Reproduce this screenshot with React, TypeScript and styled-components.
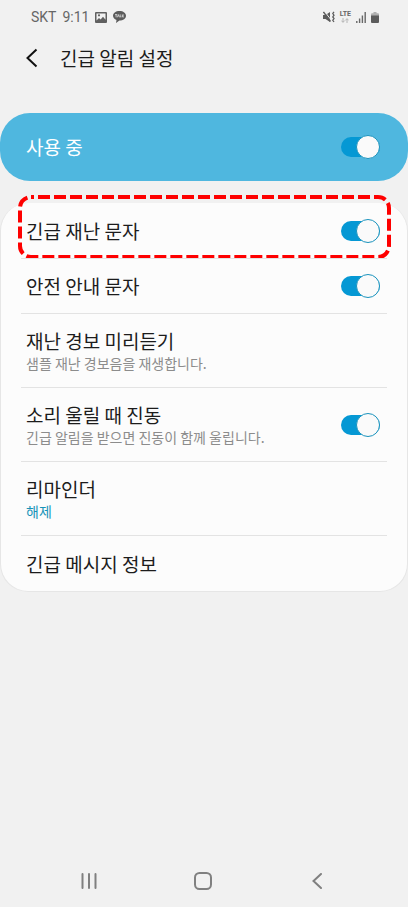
import React, { useState } from "react";
import styled, { createGlobalStyle } from "styled-components";

const GlobalStyle = createGlobalStyle`
  *, *::before, *::after { box-sizing: border-box; }
  body {
    margin: 0;
    background: #f1f1f1;
    color: #1c1c1c;
    font-family: "Noto Sans CJK KR", "Noto Sans", sans-serif;
  }
`;

const Screen = styled.div`
  min-height: 100vh;
  display: flex;
  flex-direction: column;
  background: #f1f1f1;
`;

const StatusBar = styled.div`
  display: flex;
  align-items: center;
  justify-content: space-between;
  height: 34px;
  padding: 0 29px 0 31px;
  color: #666;
  font: 14px/20px Roboto, sans-serif;
`;

const StatusGroup = styled.div<{ $gap: number }>`
  display: flex;
  align-items: center;
  gap: ${(p) => p.$gap}px;
`;

const Header = styled.header`
  display: flex;
  align-items: center;
  gap: 20px;
  height: 48px;
  padding: 0 24px;
  margin-bottom: 31px;
`;

const IconButton = styled.button`
  display: flex;
  align-items: center;
  justify-content: center;
  padding: 0;
  border: 0;
  background: none;
  color: inherit;
  cursor: pointer;
`;

const PageTitle = styled.h1`
  margin: 0;
  font-size: 19px;
  line-height: 28px;
  font-weight: 400;
`;

const MasterRow = styled.label`
  display: flex;
  align-items: center;
  justify-content: space-between;
  height: 68px;
  padding: 0 28px 0 26px;
  border-radius: 30px;
  background: #4fb7df;
  color: #fff;
  font-size: 19px;
  line-height: 24px;
  cursor: pointer;
`;

const Card = styled.main`
  margin-top: 22px;
  padding: 0 20px;
  border: 1px solid #e6e6e6;
  border-top: 0;
  border-radius: 28px;
  background: #fcfcfc;
`;

const List = styled.ul`
  margin: 0;
  padding: 0;
  list-style: none;
`;

const Item = styled.li<{ $tall?: boolean }>`
  position: relative;
  display: flex;
  min-height: ${(p) => (p.$tall ? 74 : 55)}px;
  & + & { border-top: 1px solid #e3e3e3; }
  &:last-child { min-height: 56px; }
`;

const rowStyle = `
  flex: 1;
  display: flex;
  align-items: center;
  justify-content: space-between;
  padding: 0 7px 0 5px;
  border: 0;
  background: none;
  color: inherit;
  font: inherit;
  text-align: left;
  cursor: pointer;
`;
const SwitchRow = styled.label`${rowStyle}`;
const LinkRow = styled.button`${rowStyle}`;

const Texts = styled.span`
  display: flex;
  flex-direction: column;
`;

const Title = styled.span`
  font-size: 19px;
  line-height: 24px;
`;

const Note = styled.span<{ $accent?: boolean }>`
  font-size: 14px;
  line-height: 20px;
  color: ${(p) => (p.$accent ? "#1793b8" : "#8c8c8c")};
`;

const Switch = styled.input.attrs({ type: "checkbox", role: "switch" })`
  appearance: none;
  flex: none;
  display: flex;
  align-items: center;
  width: 39px;
  height: 20px;
  margin: 0;
  cursor: pointer;
  background: #0598d4;
  border-radius: 10px;
  &::before {
    content: "";
    flex: none;
    width: 24px;
    height: 24px;
    border: 1px solid #1a93bd;
    border-radius: 50%;
    background: #fafafa;
  }
  &:checked::before { margin-left: auto; }
  &:not(:checked) { filter: grayscale(1); }
`;

const Highlight = styled.svg`
  position: absolute;
  top: -8px;
  left: -3px;
  width: calc(100% + 7px);
  height: 64px;
  pointer-events: none;
  overflow: visible;
  rect {
    x: 2px;
    y: 2px;
    width: calc(100% - 4px);
    height: 60px;
    fill: none;
    stroke: #fe0000;
    stroke-width: 4px;
    stroke-dasharray: 12 4;
    stroke-dashoffset: -7px;
  }
`;

const NavBar = styled.nav`
  display: flex;
  justify-content: space-around;
  align-items: center;
  margin-top: auto;
  height: 52px;
  padding: 0 34px 0 32px;
  color: #808080;
`;

const NavButton = styled(IconButton)`
  width: 48px;
  height: 40px;
`;

type Setting = {
  title: string;
  note?: string;
  accent?: boolean;
  toggle?: boolean;
  highlighted?: boolean;
};

const settings: Setting[] = [
  { title: "긴급 재난 문자", toggle: true, highlighted: true },
  { title: "안전 안내 문자", toggle: true },
  { title: "재난 경보 미리듣기", note: "샘플 재난 경보음을 재생합니다." },
  { title: "소리 울릴 때 진동", note: "긴급 알림을 받으면 진동이 함께 울립니다.", toggle: true },
  { title: "리마인더", note: "해제", accent: true },
  { title: "긴급 메시지 정보" },
];

function SettingItem({ title, note, accent, toggle, highlighted }: Setting) {
  const [on, setOn] = useState(true);
  const texts = (
    <Texts>
      <Title>{title}</Title>
      {note && <Note $accent={accent}>{note}</Note>}
    </Texts>
  );
  return (
    <Item $tall={!!note}>
      {toggle ? (
        <SwitchRow>
          {texts}
          <Switch checked={on} onChange={(e) => setOn(e.target.checked)} />
        </SwitchRow>
      ) : (
        <LinkRow type="button">{texts}</LinkRow>
      )}
      {highlighted && (
        <Highlight aria-hidden="true">
          <rect rx="11" />
        </Highlight>
      )}
    </Item>
  );
}

const GalleryIcon = () => (
  <svg width="12" height="11" viewBox="0 0 12 11" aria-hidden="true">
    <path fill="#606060" fillRule="evenodd" d="M1 0h10a1 1 0 0 1 1 1v9a1 1 0 0 1-1 1H1a1 1 0 0 1-1-1V1a1 1 0 0 1 1-1Zm.5 1.4v7.200L4 6l1.600 1.600L8 4.700l2.500 3V1.400ZM4 2.200a1.100 1.100 0 1 1 0 2.200 1.100 1.100 0 0 1 0-2.200Z" />
  </svg>
);

const TalkIcon = () => (
  <svg width="13" height="12" viewBox="0 0 13 12" aria-hidden="true">
    <path fill="#5c5c5c" d="M6.500 0C10.200 0 13 2.100 13 4.800s-2.800 4.800-6.500 4.800L3 12l.5-3C1.400 8.200 0 6.700 0 4.800 0 2.100 2.800 0 6.500 0Z" />
    <path fill="none" stroke="#e4e4e4" strokeWidth=".8" d="M2 3.600h2.300M3.100 3.600v2.700M4.400 6.300l1-2.700 1 2.700M7.200 3.400v2.500h1.200M9.300 3.400v2.900M11 3.600 9.500 5 11 6.300" />
  </svg>
);

const MuteIcon = () => (
  <svg width="12" height="12" viewBox="0 0 12 12" aria-hidden="true">
    <path fill="#5c5c5c" d="M0 4h2.500L7 1v10L2.500 8H0Z" />
    <path stroke="#f1f1f1" d="m1.600.4 6.800 9" />
    <path stroke="#5c5c5c" strokeWidth="1.300" d="m.5 1 7 9.500" />
    <path fill="none" stroke="#5c5c5c" strokeWidth="1.300" d="M11 .8 9.800 2.500 11 4.200 9.800 5.900 11 7.600 9.800 9.300 11 11" />
  </svg>
);

const LteBox = styled.span`
  display: flex;
  flex-direction: column;
  align-items: center;
  gap: 1px;
  font: 700 7px/6px Roboto, sans-serif;
`;

const Lte = () => (
  <LteBox>
    LTE
    <svg width="8" height="5" viewBox="0 0 8 5" aria-hidden="true">
      <path fill="none" stroke="#b4b4b4" d="M2 0v4.200M.3 2.600 2 4.300l1.700-1.700M6 5V.8M4.300 2.400 6 .7l1.700 1.700" />
    </svg>
  </LteBox>
);

const SignalIcon = () => (
  <svg width="10" height="11" viewBox="0 0 10 11" aria-hidden="true">
    <path stroke="#686868" strokeWidth="1.400" d="M.8 11V9M3.600 11V6.500M6.400 11V3.500M9.200 11V0" />
  </svg>
);

const BatteryIcon = () => (
  <svg width="8" height="11" viewBox="0 0 8 11" aria-hidden="true">
    <path fill="#b0b0b0" d="M2.500 0h3v1.200H7a1 1 0 0 1 1 1V4H0V2.200a1 1 0 0 1 1-1h1.500Z" />
    <path fill="#5c5c5c" d="M0 3.500h8V10a1 1 0 0 1-1 1H1a1 1 0 0 1-1-1Z" />
  </svg>
);

export default function App() {
  const [enabled, setEnabled] = useState(true);
  return (
    <Screen>
      <GlobalStyle />
      <StatusBar>
        <StatusGroup $gap={6}>
          <span>SKT</span>
          <span>9:11</span>
          <GalleryIcon />
          <TalkIcon />
        </StatusGroup>
        <StatusGroup $gap={5}>
          <MuteIcon />
          <Lte />
          <SignalIcon />
          <BatteryIcon />
        </StatusGroup>
      </StatusBar>
      <Header>
        <IconButton type="button" aria-label="뒤로">
          <svg width="16" height="20" viewBox="0 0 16 20" fill="none" stroke="#111" strokeWidth="2" aria-hidden="true">
            <path d="m12.500 1.500-9 8.500 9 8.500" />
          </svg>
        </IconButton>
        <PageTitle>긴급 알림 설정</PageTitle>
      </Header>
      <MasterRow>
        사용 중
        <Switch checked={enabled} onChange={(e) => setEnabled(e.target.checked)} />
      </MasterRow>
      <Card>
        <List>
          {settings.map((s) => (
            <SettingItem key={s.title} {...s} />
          ))}
        </List>
      </Card>
      <NavBar>
        <NavButton type="button" aria-label="최근 앱">
          <svg width="16" height="16" viewBox="0 0 16 16" stroke="currentColor" strokeWidth="2" strokeLinecap="round" aria-hidden="true">
            <path d="M1.500 1v14M8 1v14M14.500 1v14" />
          </svg>
        </NavButton>
        <NavButton type="button" aria-label="홈">
          <svg width="18" height="18" viewBox="0 0 18 18" fill="none" stroke="currentColor" strokeWidth="2" aria-hidden="true">
            <rect x="1" y="1" width="16" height="16" rx="4.500" />
          </svg>
        </NavButton>
        <NavButton type="button" aria-label="뒤로 가기">
          <svg width="10" height="16" viewBox="0 0 10 16" fill="none" stroke="currentColor" strokeWidth="2" strokeLinecap="round" aria-hidden="true">
            <path d="M9 1 1.500 8 9 15" />
          </svg>
        </NavButton>
      </NavBar>
    </Screen>
  );
}
